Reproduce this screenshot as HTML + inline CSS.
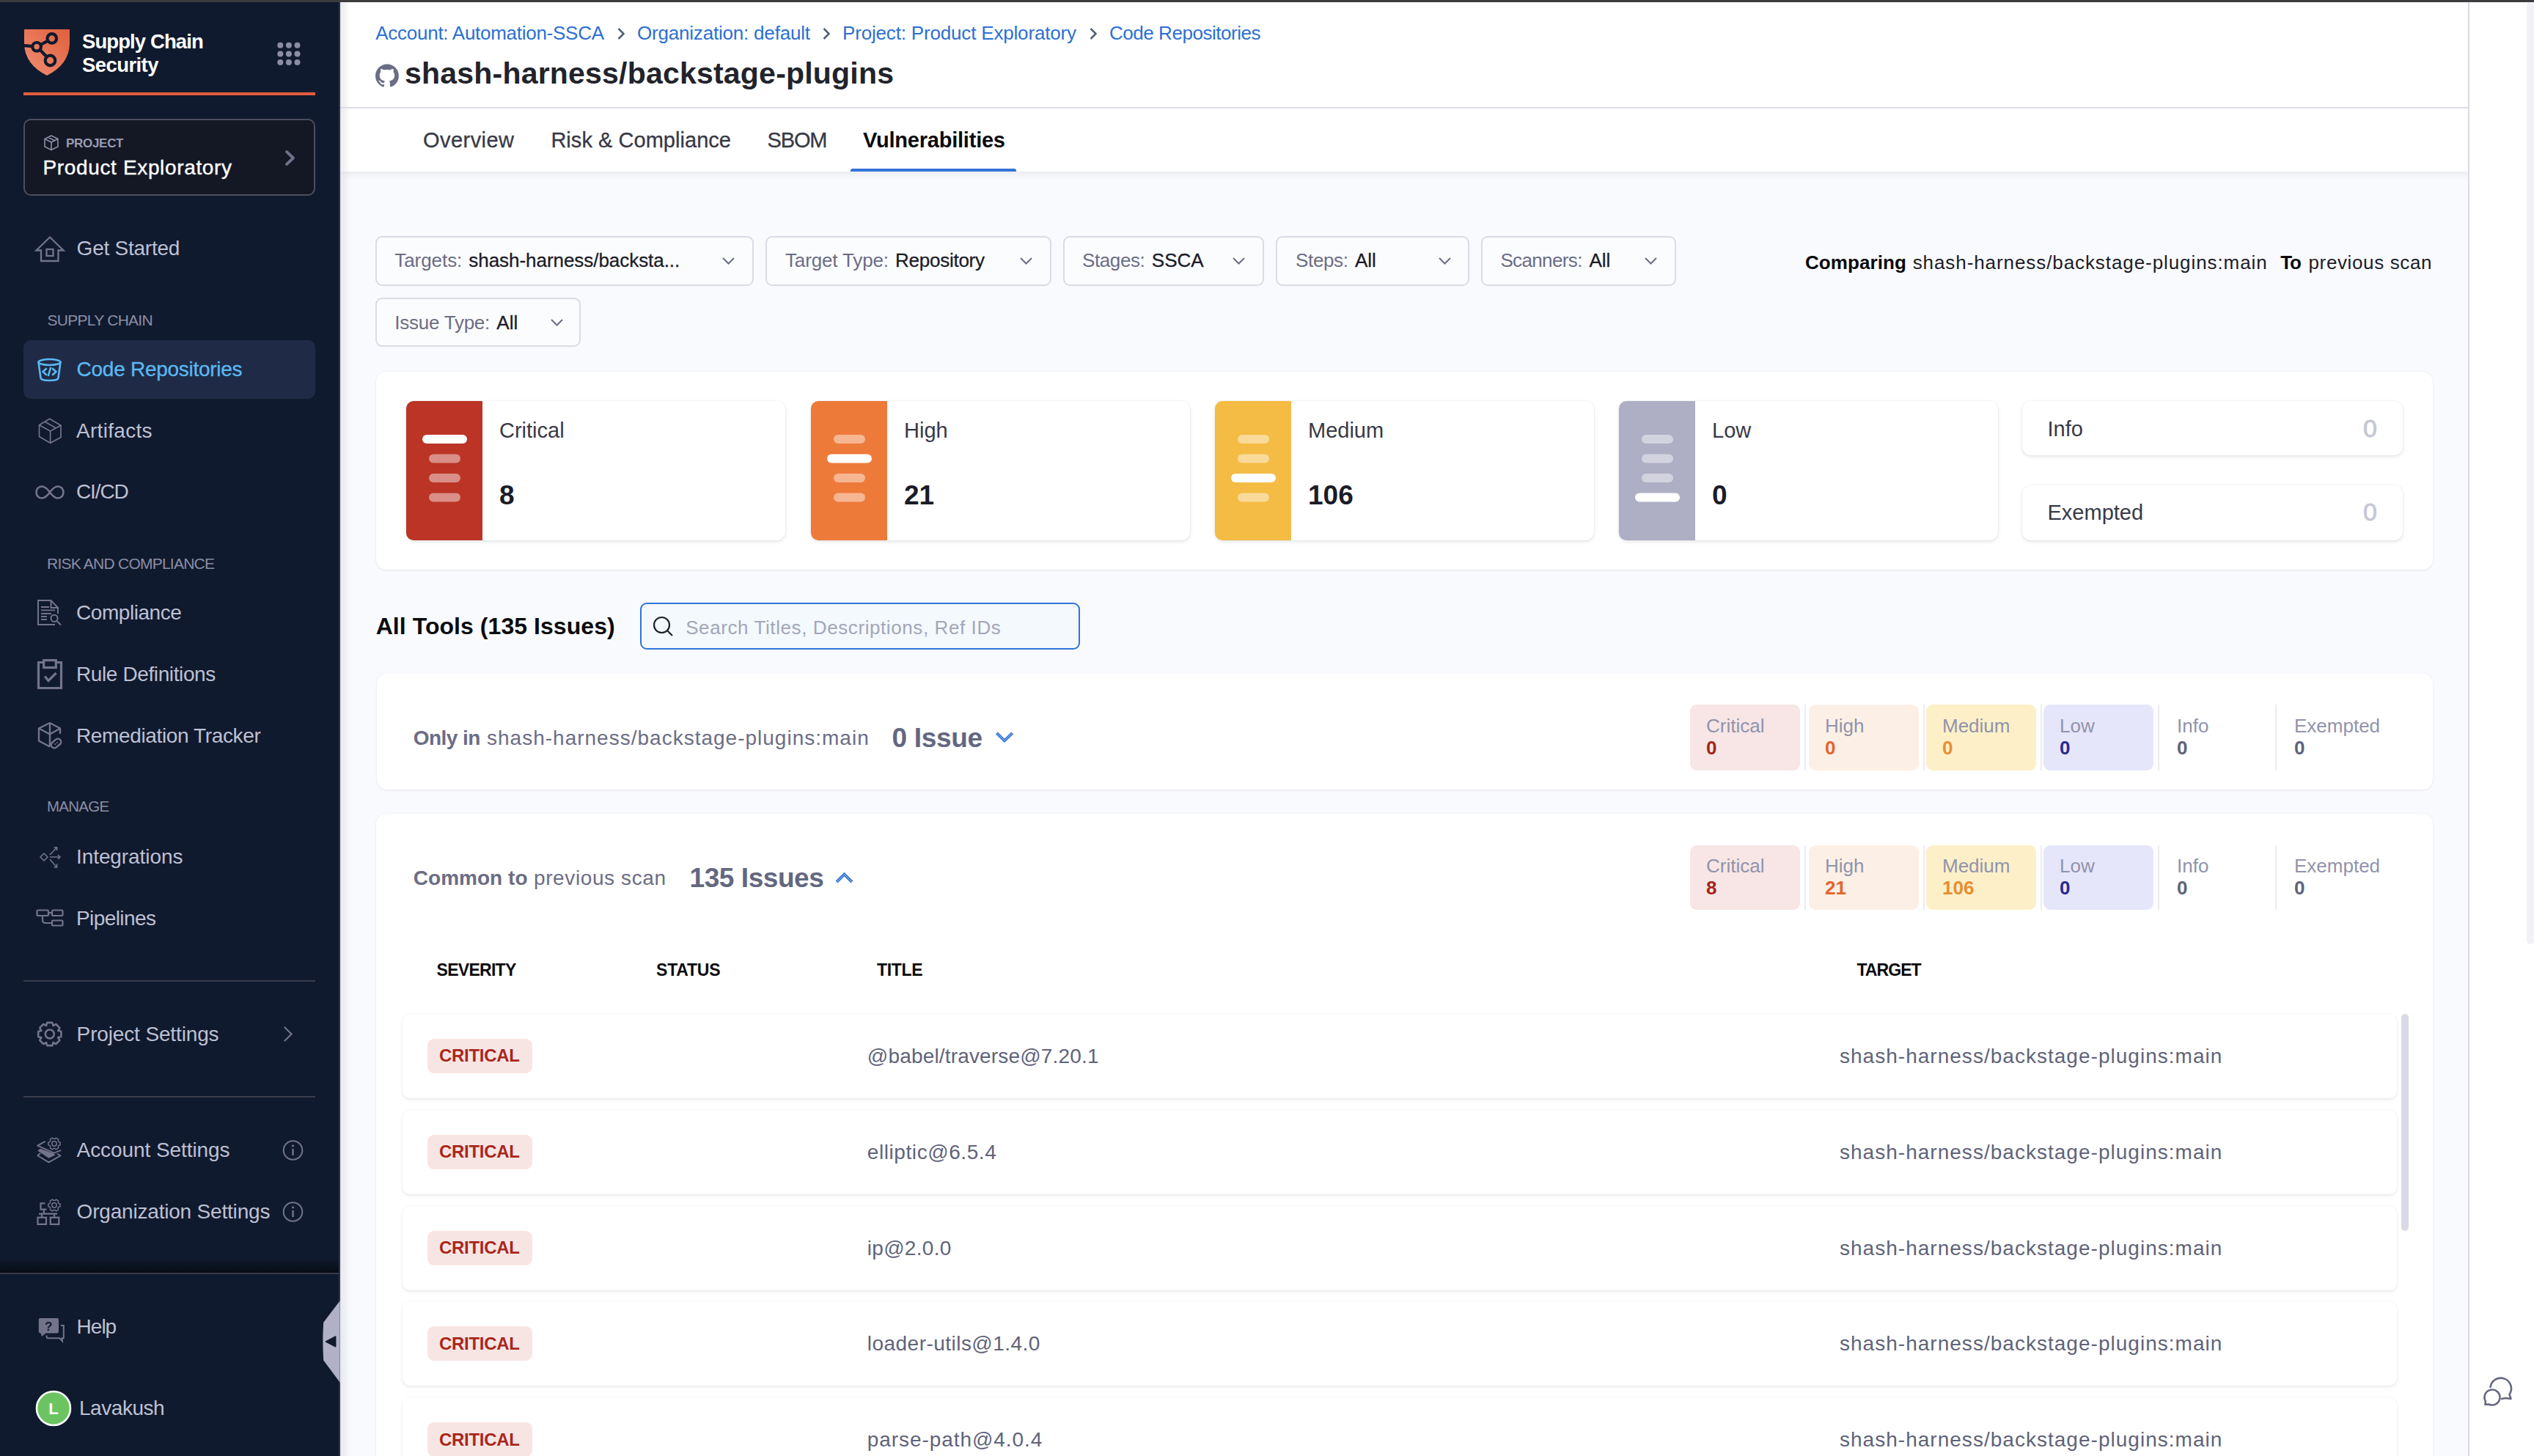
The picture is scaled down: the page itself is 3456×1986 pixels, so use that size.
<!DOCTYPE html>
<html><head><meta charset="utf-8"><style>
html,body{margin:0;padding:0;}
body{width:3456px;height:1986px;overflow:hidden;position:relative;background:#f9fafd;font-family:"Liberation Sans",sans-serif;}
.t{position:absolute;line-height:1;white-space:pre;}
svg{overflow:visible}
</style></head><body>
<div style="position:absolute;left:0px;top:0px;width:464px;height:1986px;background:#101a2e;"></div><div style="position:absolute;left:462px;top:0px;width:2px;height:1986px;background:#2c3244;"></div><div style="position:absolute;left:0px;top:1716px;width:462px;height:20px;background:linear-gradient(to bottom,rgba(0,0,0,0),rgba(0,0,0,0.55));"></div><div style="position:absolute;left:0px;top:1736px;width:462px;height:2px;background:#383a48;"></div><div style="position:absolute;left:464px;top:0px;width:2903px;height:234px;background:#fff;box-shadow:0 4px 8px rgba(96,97,112,0.10);"></div><div style="position:absolute;left:464px;top:146px;width:2903px;height:2px;background:#dcdde8;"></div><div style="position:absolute;left:3367px;top:0px;width:89px;height:1986px;background:#fff;"></div><div style="position:absolute;left:3366px;top:0px;width:2px;height:1986px;background:#d9d9e6;"></div><div style="position:absolute;left:3446px;top:3px;width:10px;height:1285px;background:#f2f1f8;border-radius:5px;"></div><div style="position:absolute;left:464px;top:3px;width:14px;height:1983px;background:linear-gradient(to right,rgba(215,217,225,0.55),rgba(215,217,225,0));"></div><div style="position:absolute;left:0px;top:0px;width:3456px;height:3px;background:#3c3c3c;"></div><div style="position:absolute;left:1160px;top:230px;width:226px;height:4px;background:#3473d9;border-radius:3px 3px 0 0;"></div><div style="position:absolute;left:512px;top:322px;width:516px;height:68px;border:2px solid #dadbe5;border-radius:9px;box-sizing:border-box;background:#fbfcfe;"></div><div style="position:absolute;left:1044px;top:322px;width:390px;height:68px;border:2px solid #dadbe5;border-radius:9px;box-sizing:border-box;background:#fbfcfe;"></div><div style="position:absolute;left:1450px;top:322px;width:274px;height:68px;border:2px solid #dadbe5;border-radius:9px;box-sizing:border-box;background:#fbfcfe;"></div><div style="position:absolute;left:1740px;top:322px;width:264px;height:68px;border:2px solid #dadbe5;border-radius:9px;box-sizing:border-box;background:#fbfcfe;"></div><div style="position:absolute;left:2020px;top:322px;width:266px;height:68px;border:2px solid #dadbe5;border-radius:9px;box-sizing:border-box;background:#fbfcfe;"></div><div style="position:absolute;left:512px;top:406px;width:280px;height:67px;border:2px solid #dadbe5;border-radius:9px;box-sizing:border-box;background:#fbfcfe;"></div><div style="position:absolute;left:513px;top:507px;width:2805px;height:270px;background:#fff;border-radius:14px;box-shadow:0 0 2px rgba(40,41,61,0.06),0 1px 3px rgba(96,97,112,0.10);"></div><div style="position:absolute;left:554px;top:547px;width:517px;height:190px;background:#fff;border-radius:12px;box-shadow:0 0 2px rgba(40,41,61,0.08),0 2px 5px rgba(96,97,112,0.16);overflow:hidden;"></div><div style="position:absolute;left:554px;top:547px;width:104px;height:190px;background:#bb3426;border-radius:10px 0 0 10px;"></div><div style="position:absolute;left:1106px;top:547px;width:517px;height:190px;background:#fff;border-radius:12px;box-shadow:0 0 2px rgba(40,41,61,0.08),0 2px 5px rgba(96,97,112,0.16);overflow:hidden;"></div><div style="position:absolute;left:1106px;top:547px;width:104px;height:190px;background:#ee7a3a;border-radius:10px 0 0 10px;"></div><div style="position:absolute;left:1657px;top:547px;width:517px;height:190px;background:#fff;border-radius:12px;box-shadow:0 0 2px rgba(40,41,61,0.08),0 2px 5px rgba(96,97,112,0.16);overflow:hidden;"></div><div style="position:absolute;left:1657px;top:547px;width:104px;height:190px;background:#f4bc44;border-radius:10px 0 0 10px;"></div><div style="position:absolute;left:2208px;top:547px;width:517px;height:190px;background:#fff;border-radius:12px;box-shadow:0 0 2px rgba(40,41,61,0.08),0 2px 5px rgba(96,97,112,0.16);overflow:hidden;"></div><div style="position:absolute;left:2208px;top:547px;width:104px;height:190px;background:#aeafc4;border-radius:10px 0 0 10px;"></div><div style="position:absolute;left:2758px;top:547px;width:519px;height:74px;background:#fff;border-radius:12px;box-shadow:0 0 2px rgba(40,41,61,0.08),0 2px 5px rgba(96,97,112,0.16);"></div><div style="position:absolute;left:2758px;top:662px;width:519px;height:75px;background:#fff;border-radius:12px;box-shadow:0 0 2px rgba(40,41,61,0.08),0 2px 5px rgba(96,97,112,0.16);"></div><div style="position:absolute;left:873px;top:822px;width:600px;height:64px;border:2px solid #2f75d8;border-radius:9px;box-sizing:border-box;background:#f3f9fd;"></div><div style="position:absolute;left:514px;top:919px;width:2804px;height:158px;background:#fff;border-radius:14px;box-shadow:0 0 2px rgba(40,41,61,0.05),0 1px 3px rgba(96,97,112,0.10);"></div><div style="position:absolute;left:513px;top:1110px;width:2805px;height:990px;background:#fff;border-radius:14px;box-shadow:0 0 2px rgba(40,41,61,0.05),0 1px 3px rgba(96,97,112,0.10);"></div><div style="position:absolute;left:2305px;top:961px;width:150px;height:90px;background:#f7e6e5;border-radius:9px;"></div><div style="position:absolute;left:2461px;top:961px;width:2px;height:90px;background:#ececf2;"></div><div style="position:absolute;left:2467px;top:961px;width:150px;height:90px;background:#fcf0e6;border-radius:9px;"></div><div style="position:absolute;left:2623px;top:961px;width:2px;height:90px;background:#ececf2;"></div><div style="position:absolute;left:2627px;top:961px;width:150px;height:90px;background:#fdf0c8;border-radius:9px;"></div><div style="position:absolute;left:2783px;top:961px;width:2px;height:90px;background:#ececf2;"></div><div style="position:absolute;left:2787px;top:961px;width:150px;height:90px;background:#e6e6fa;border-radius:9px;"></div><div style="position:absolute;left:2943px;top:961px;width:2px;height:90px;background:#ececf2;"></div><div style="position:absolute;left:3103px;top:961px;width:2px;height:90px;background:#ececf2;"></div><div style="position:absolute;left:2305px;top:1153px;width:150px;height:88px;background:#f7e6e5;border-radius:9px;"></div><div style="position:absolute;left:2461px;top:1153px;width:2px;height:88px;background:#ececf2;"></div><div style="position:absolute;left:2467px;top:1153px;width:150px;height:88px;background:#fcf0e6;border-radius:9px;"></div><div style="position:absolute;left:2623px;top:1153px;width:2px;height:88px;background:#ececf2;"></div><div style="position:absolute;left:2627px;top:1153px;width:150px;height:88px;background:#fdf0c8;border-radius:9px;"></div><div style="position:absolute;left:2783px;top:1153px;width:2px;height:88px;background:#ececf2;"></div><div style="position:absolute;left:2787px;top:1153px;width:150px;height:88px;background:#e6e6fa;border-radius:9px;"></div><div style="position:absolute;left:2943px;top:1153px;width:2px;height:88px;background:#ececf2;"></div><div style="position:absolute;left:3103px;top:1153px;width:2px;height:88px;background:#ececf2;"></div><div style="position:absolute;left:549px;top:1383px;width:2720px;height:115px;background:#fff;border-radius:10px;box-shadow:0 0 1.5px rgba(40,41,61,0.05),0 2px 4px rgba(96,97,112,0.13);"></div><div style="position:absolute;left:583px;top:1417px;width:143px;height:47px;background:#f7e5e4;border-radius:9px;"></div><div style="position:absolute;left:549px;top:1514px;width:2720px;height:115px;background:#fff;border-radius:10px;box-shadow:0 0 1.5px rgba(40,41,61,0.05),0 2px 4px rgba(96,97,112,0.13);"></div><div style="position:absolute;left:583px;top:1548px;width:143px;height:47px;background:#f7e5e4;border-radius:9px;"></div><div style="position:absolute;left:549px;top:1645px;width:2720px;height:115px;background:#fff;border-radius:10px;box-shadow:0 0 1.5px rgba(40,41,61,0.05),0 2px 4px rgba(96,97,112,0.13);"></div><div style="position:absolute;left:583px;top:1679px;width:143px;height:47px;background:#f7e5e4;border-radius:9px;"></div><div style="position:absolute;left:549px;top:1775px;width:2720px;height:115px;background:#fff;border-radius:10px;box-shadow:0 0 1.5px rgba(40,41,61,0.05),0 2px 4px rgba(96,97,112,0.13);"></div><div style="position:absolute;left:583px;top:1809px;width:143px;height:47px;background:#f7e5e4;border-radius:9px;"></div><div style="position:absolute;left:549px;top:1906px;width:2720px;height:115px;background:#fff;border-radius:10px;box-shadow:0 0 1.5px rgba(40,41,61,0.05),0 2px 4px rgba(96,97,112,0.13);"></div><div style="position:absolute;left:583px;top:1940px;width:143px;height:47px;background:#f7e5e4;border-radius:9px;"></div><div style="position:absolute;left:3275px;top:1383px;width:10px;height:296px;background:#d9dae5;border-radius:5px;"></div><div style="position:absolute;left:32px;top:126px;width:398px;height:4px;background:#e35c3e;"></div><div style="position:absolute;left:32px;top:162px;width:398px;height:105px;border:2px solid #4b4f5f;border-radius:10px;box-sizing:border-box;background:#131824;"></div><div style="position:absolute;left:32px;top:464px;width:398px;height:80px;background:#1f2b46;border-radius:10px;"></div><div style="position:absolute;left:32px;top:1337px;width:398px;height:2px;background:#3a3e4e;"></div><div style="position:absolute;left:32px;top:1495px;width:398px;height:2px;background:#3a3e4e;"></div><svg style="position:absolute;left:20px;top:30px;" width="100" height="80" viewBox="0 0 100 80"><defs><linearGradient id="lg" x1="0" y1="1" x2="1" y2="0"><stop offset="0" stop-color="#f08f74"/><stop offset="1" stop-color="#e05f3c"/></linearGradient></defs>
<path d="M13 10.5 Q13 10 14 10 L74 10 Q75 10 75 11 L75 30 Q74 58 44 73 Q14 58 13 30 Z" fill="url(#lg)"/>
<g stroke="#101a2e" stroke-width="4.2" fill="none"><circle cx="50.8" cy="22.5" r="6.3"/><circle cx="30.1" cy="33.8" r="5.8"/><circle cx="48.5" cy="52.5" r="6.8"/>
<path d="M35.5 31 L45.3 25.6 M34.3 37.8 L43.5 47.3 M10 31.8 L24.3 33.2"/></g></svg><svg style="position:absolute;left:0px;top:0px;" width="464" height="120" viewBox="0 0 464 120"><circle cx="382.3" cy="61.8" r="4" fill="#8b8da4"/><circle cx="393.90000000000003" cy="61.8" r="4" fill="#8b8da4"/><circle cx="405.5" cy="61.8" r="4" fill="#8b8da4"/><circle cx="382.3" cy="73.39999999999999" r="4" fill="#8b8da4"/><circle cx="393.90000000000003" cy="73.39999999999999" r="4" fill="#8b8da4"/><circle cx="405.5" cy="73.39999999999999" r="4" fill="#8b8da4"/><circle cx="382.3" cy="85.0" r="4" fill="#8b8da4"/><circle cx="393.90000000000003" cy="85.0" r="4" fill="#8b8da4"/><circle cx="405.5" cy="85.0" r="4" fill="#8b8da4"/></svg><svg style="position:absolute;left:58px;top:183px;" width="26" height="26" viewBox="0 0 26 26"><g fill="none" stroke="#8d8fa6" stroke-width="1.6" stroke-linejoin="round"><path d="M12 2 L21 6.5 L21 17 L12 21.5 L3 17 L3 6.5 Z M3 6.5 L12 11 L21 6.5 M12 11 L12 21.5 M7.5 4.3 L16.5 8.8"/></g></svg><svg style="position:absolute;left:386px;top:203px;" width="20" height="26" viewBox="0 0 20 26"><path d="M5 4 L14 12.5 L5 21" fill="none" stroke="#6f718a" stroke-width="3.8" stroke-linecap="round" stroke-linejoin="round"/></svg><svg style="position:absolute;left:46px;top:320px;" width="44" height="40" viewBox="0 0 44 40"><g fill="none" stroke="#72748b" stroke-width="2.3" stroke-linejoin="miter"><path d="M3.5 21.5 L22 3.5 L40.5 21.5 L33.5 21.5 L33.5 36 L10 36 L10 21.5 Z"/><rect x="17.5" y="20" width="9" height="9"/></g></svg><svg style="position:absolute;left:48px;top:486px;" width="40" height="38" viewBox="0 0 40 38"><g fill="none" stroke="#5cb8f2" stroke-width="2.6" stroke-linecap="round" stroke-linejoin="round"><ellipse cx="19.5" cy="8" rx="15" ry="4"/><path d="M4.5 8 L7.5 29.5 Q8 33 19.5 33 Q31 33 31.5 29.5 L34.5 8"/><path d="M15 17 L10.5 21 L15 25 M24 17 L28.5 21 L24 25 M21 16 L18 26"/></g></svg><svg style="position:absolute;left:50px;top:568px;" width="40" height="40" viewBox="0 0 40 40"><g fill="none" stroke="#72748b" stroke-width="1.7" stroke-linejoin="round"><path d="M17.6 3.3 L33 12.2 L33 28.5 L18.6 36.2 L3.5 27.6 L3.5 11.7 Z M3.5 11.7 L18.6 19.9 L33 12.2 M18.6 19.9 L18.6 36.2 M11.6 7.4 L26.5 16"/></g></svg><svg style="position:absolute;left:46px;top:658px;" width="44" height="28" viewBox="0 0 44 28"><path d="M22 13.5 C18 8 15 5.5 11 5.5 C6.5 5.5 3.5 9 3.5 13.5 C3.5 18 6.5 21.5 11 21.5 C15 21.5 18 19 22 13.5 C26 8 29 5.5 33 5.5 C37.5 5.5 40.5 9 40.5 13.5 C40.5 18 37.5 21.5 33 21.5 C29 21.5 26 19 22 13.5 Z" fill="none" stroke="#72748b" stroke-width="2.6"/></svg><svg style="position:absolute;left:48px;top:815px;" width="40" height="42" viewBox="0 0 40 42"><g fill="none" stroke="#72748b" stroke-width="2"><path d="M31 22 L31 14 L21.5 4 L4 4 L4 37 L27 37 M21.5 4 L21.5 14 L31 14"/><path d="M8 13 L19 13 M8 17.4 L27 17.4 M8 22 L22 22 M8 26 L16 26 M8 30 L16 30" stroke-width="1.8"/><circle cx="26" cy="28.3" r="4.6"/><path d="M29.5 32 L35 37.5"/></g></svg><svg style="position:absolute;left:48px;top:897px;" width="40" height="46" viewBox="0 0 40 46"><g fill="none" stroke="#72748b" stroke-width="3.2"><path d="M11.7 6.5 L4.5 6.5 L4.5 41.5 L35.5 41.5 L35.5 6.5 L28.3 6.5"/><rect x="11.7" y="3.6" width="16.6" height="10"/><path d="M13.2 25.5 L18 31.5 L28.6 21" stroke-linecap="butt"/></g></svg><svg style="position:absolute;left:48px;top:983px;" width="42" height="42" viewBox="0 0 42 42"><g fill="none" stroke="#72748b" stroke-width="2.4" stroke-linejoin="round"><path d="M20 3 L34 10.5 L34 18 M20 3 L5 10.5 L5 27.5 L20 35.5 M5 10.5 L20 18.5 L34 10.5 M20 3 L20 18.5 L20 35.5"/><rect x="21" y="26.7" width="15" height="8.6" rx="4.3" transform="rotate(-40 28.5 31)" fill="#101a2e"/></g><g fill="#72748b"><circle cx="27.3" cy="32" r="1"/><circle cx="29.9" cy="30" r="1"/></g></svg><svg style="position:absolute;left:48px;top:1150px;" width="40" height="40" viewBox="0 0 40 40"><g fill="none" stroke="#72748b" stroke-width="1.6" stroke-linejoin="round"><path d="M12 14 L17 19 L12 24 L7 19 Z"/><path d="M20 19 L34 19 M31 16 L34 19 L31 22 M20 16 L29.5 6 M25.5 6 L29.7 5.7 L29.5 10 M20 22 L29.5 33 M29.6 28.5 L29.7 33 L25.5 33"/></g></svg><svg style="position:absolute;left:48px;top:1238px;" width="40" height="28" viewBox="0 0 40 28"><g fill="none" stroke="#72748b" stroke-width="2.2"><rect x="2.5" y="3.5" width="15.5" height="7.5" rx="1.5"/><rect x="23" y="3.5" width="14.5" height="7.5" rx="1.5"/><rect x="23" y="17.5" width="14.5" height="7" rx="1.5"/><path d="M18 7.2 L23 7.2 M10 11 L10 17 Q10 21 14 21 L23 21"/></g></svg><svg style="position:absolute;left:0px;top:0px;" width="464" height="1986" viewBox="0 0 464 1986"><polygon points="83.41,1407.01 83.41,1413.99 79.20,1415.59 79.46,1414.96 81.31,1419.07 76.37,1424.01 72.26,1422.16 72.89,1421.90 71.29,1426.11 64.31,1426.11 62.71,1421.90 63.34,1422.16 59.23,1424.01 54.29,1419.07 56.14,1414.96 56.40,1415.59 52.19,1413.99 52.19,1407.01 56.40,1405.41 56.14,1406.04 54.29,1401.93 59.23,1396.99 63.34,1398.84 62.71,1399.10 64.31,1394.89 71.29,1394.89 72.89,1399.10 72.26,1398.84 76.37,1396.99 81.31,1401.93 79.46,1406.04 79.20,1405.41" fill="none" stroke="#72748b" stroke-width="2.6" stroke-linejoin="round"/><circle cx="67.8" cy="1410.5" r="6" fill="none" stroke="#72748b" stroke-width="2.6"/></svg><svg style="position:absolute;left:380px;top:1398px;" width="24" height="26" viewBox="0 0 24 26"><path d="M8.5 3.5 L17.5 12.5 L8.5 21.5" fill="none" stroke="#72748b" stroke-width="2.2" stroke-linecap="round"/></svg><svg style="position:absolute;left:44px;top:1545px;" width="50" height="50" viewBox="0 0 50 50"><g fill="none" stroke="#72748b" stroke-width="1.9" stroke-linejoin="round" stroke-linecap="round"><path d="M17.2 12.2 L7.2 17.6 L29.3 27.6 L38.5 24.3"/><path d="M10.5 28.6 L7.2 31.3 L22.5 40.4 L38.5 31.3 L34.5 29"/></g><polygon points="7.2,24.6 10.8,21.8 29.3,28.6 31.5,30.5 22.5,34.8" fill="#72748b"/><polygon points="38.10,13.19 38.10,16.81 35.91,17.64 35.24,18.80 35.62,21.11 32.48,22.92 30.67,21.44 29.33,21.44 27.52,22.92 24.38,21.11 24.76,18.80 24.09,17.64 21.90,16.81 21.90,13.19 24.09,12.36 24.76,11.20 24.38,8.89 27.52,7.08 29.33,8.56 30.67,8.56 32.48,7.08 35.62,8.89 35.24,11.20 35.91,12.36" fill="none" stroke="#72748b" stroke-width="1.5" stroke-linejoin="round"/><circle cx="30" cy="15" r="3.2" fill="none" stroke="#72748b" stroke-width="1.5"/></svg><svg style="position:absolute;left:44px;top:1628px;" width="50" height="50" viewBox="0 0 50 50"><g fill="none" stroke="#72748b" stroke-width="2.2"><path d="M17.5 13.3 L11.5 13.3 L11.5 21.7 L19.5 21.7 M15.8 21.7 L15.8 27.5 M9 27.6 L34 27.6 M13 27.6 L13 32.7 M30 27.6 L30 32.7"/><rect x="7.5" y="32.7" width="11.5" height="9.2"/><rect x="24.8" y="32.7" width="11.5" height="9.2"/></g><polygon points="38.10,14.19 38.10,17.81 35.91,18.64 35.24,19.80 35.62,22.11 32.48,23.92 30.67,22.44 29.33,22.44 27.52,23.92 24.38,22.11 24.76,19.80 24.09,18.64 21.90,17.81 21.90,14.19 24.09,13.36 24.76,12.20 24.38,9.89 27.52,8.08 29.33,9.56 30.67,9.56 32.48,8.08 35.62,9.89 35.24,12.20 35.91,13.36" fill="none" stroke="#72748b" stroke-width="1.5" stroke-linejoin="round"/><circle cx="30" cy="16" r="3.2" fill="none" stroke="#72748b" stroke-width="1.5"/></svg><svg style="position:absolute;left:384px;top:1554px;" width="32" height="32" viewBox="0 0 32 32"><circle cx="15.5" cy="15" r="12.8" fill="none" stroke="#72748b" stroke-width="2"/><path d="M15.5 13 L15.5 22" stroke="#72748b" stroke-width="2.4"/><circle cx="15.5" cy="8.8" r="1.6" fill="#72748b"/></svg><svg style="position:absolute;left:384px;top:1638px;" width="32" height="32" viewBox="0 0 32 32"><circle cx="15.5" cy="15" r="12.8" fill="none" stroke="#72748b" stroke-width="2"/><path d="M15.5 13 L15.5 22" stroke="#72748b" stroke-width="2.4"/><circle cx="15.5" cy="8.8" r="1.6" fill="#72748b"/></svg><svg style="position:absolute;left:44px;top:1790px;" width="50" height="50" viewBox="0 0 50 50"><path d="M10.8 8 L34 8 Q36 8 36 10 L36 26.5 Q36 28.5 34 28.5 L18.5 28.5 L13 33 L11.5 28.5 Q8.8 28.5 8.8 26.5 L8.8 10 Q8.8 8 10.8 8 Z" fill="#72748b"/><path d="M39 18 L42.8 18 L42.8 35.2 L40.5 35.2 L41 39.3 L37.2 35.2 L21 35.2 Q19.5 35.2 19.5 31.5" fill="none" stroke="#72748b" stroke-width="2"/><text x="22.3" y="25" font-family="Liberation Sans" font-weight="700" font-size="17" fill="#101a2e" text-anchor="middle">?</text></svg><svg style="position:absolute;left:46px;top:1894px;" width="56" height="56" viewBox="0 0 56 56"><circle cx="27" cy="27" r="23" fill="#6cc461" stroke="#ffffff" stroke-width="2.6"/><text x="27" y="35" font-family="Liberation Sans" font-weight="700" font-size="22" fill="#fff" text-anchor="middle">L</text></svg><svg style="position:absolute;left:430px;top:1770px;" width="40" height="120" viewBox="0 0 40 120"><path d="M33.7 4.2 L11.2 33.8 Q9.5 58 11.2 85.5 L33.7 115.7 Z" fill="#b0b1c6"/><path d="M14.5 60 L27.7 53 L27.7 66.8 Z" fill="#101a2e" stroke="#101a2e" stroke-width="1.5" stroke-linejoin="round"/></svg><svg style="position:absolute;left:512px;top:87px;" width="32" height="32" viewBox="0 0 32 32"><path fill="#6b6d85" d="M16 0.4C7.2 0.4 0 7.6 0 16.4c0 7.1 4.6 13.1 10.9 15.2.8.1 1.1-.3 1.1-.8v-2.7c-4.5 1-5.4-2.1-5.4-2.1-.7-1.8-1.8-2.3-1.8-2.3-1.5-1 .1-1 .1-1 1.6.1 2.4 1.6 2.4 1.6 1.4 2.5 3.8 1.8 4.7 1.4.1-1 .6-1.8 1-2.2-3.6-.4-7.3-1.8-7.3-7.9 0-1.7.6-3.2 1.6-4.3-.2-.4-.7-2.1.2-4.3 0 0 1.3-.4 4.4 1.6 1.3-.4 2.7-.5 4-.5s2.7.2 4 .5c3.1-2.1 4.4-1.6 4.4-1.6.9 2.2.3 3.9.2 4.3 1 1.1 1.6 2.6 1.6 4.3 0 6.1-3.7 7.5-7.3 7.9.6.5 1.1 1.5 1.1 2.9v4.4c0 .4.3.9 1.1.8 6.4-2.1 10.9-8.1 10.9-15.2C32 7.6 24.8.4 16 .4z"/></svg><svg style="position:absolute;left:840px;top:35px;" width="16" height="22" viewBox="0 0 16 22"><path d="M3.5 4 L10.5 11 L3.5 18" fill="none" stroke="#526174" stroke-width="2.5"/></svg><svg style="position:absolute;left:1120px;top:35px;" width="16" height="22" viewBox="0 0 16 22"><path d="M3.5 4 L10.5 11 L3.5 18" fill="none" stroke="#526174" stroke-width="2.5"/></svg><svg style="position:absolute;left:1484px;top:35px;" width="16" height="22" viewBox="0 0 16 22"><path d="M3.5 4 L10.5 11 L3.5 18" fill="none" stroke="#526174" stroke-width="2.5"/></svg><svg style="position:absolute;left:984.4px;top:348.5px;" width="20" height="16" viewBox="0 0 20 16"><path d="M2 3 L9.5 10.5 L17 3" fill="none" stroke="#6b6d85" stroke-width="2"/></svg><svg style="position:absolute;left:1390px;top:348.5px;" width="20" height="16" viewBox="0 0 20 16"><path d="M2 3 L9.5 10.5 L17 3" fill="none" stroke="#6b6d85" stroke-width="2"/></svg><svg style="position:absolute;left:1680px;top:348.5px;" width="20" height="16" viewBox="0 0 20 16"><path d="M2 3 L9.5 10.5 L17 3" fill="none" stroke="#6b6d85" stroke-width="2"/></svg><svg style="position:absolute;left:1960.6px;top:348.5px;" width="20" height="16" viewBox="0 0 20 16"><path d="M2 3 L9.5 10.5 L17 3" fill="none" stroke="#6b6d85" stroke-width="2"/></svg><svg style="position:absolute;left:2242px;top:348.5px;" width="20" height="16" viewBox="0 0 20 16"><path d="M2 3 L9.5 10.5 L17 3" fill="none" stroke="#6b6d85" stroke-width="2"/></svg><svg style="position:absolute;left:749.6px;top:433px;" width="20" height="16" viewBox="0 0 20 16"><path d="M2 3 L9.5 10.5 L17 3" fill="none" stroke="#6b6d85" stroke-width="2"/></svg><svg style="position:absolute;left:0px;top:0px;" width="3456" height="800" viewBox="0 0 3456 800"><rect x="576" y="593" width="61" height="12" rx="6" fill="#ffffff"/><rect x="585" y="619.5" width="43" height="12" rx="6" fill="rgba(255,255,255,0.45)"/><rect x="585" y="646" width="43" height="12" rx="6" fill="rgba(255,255,255,0.45)"/><rect x="585" y="672.5" width="43" height="12" rx="6" fill="rgba(255,255,255,0.45)"/><rect x="1137" y="593" width="43" height="12" rx="6" fill="rgba(255,255,255,0.45)"/><rect x="1128" y="619.5" width="61" height="12" rx="6" fill="#ffffff"/><rect x="1137" y="646" width="43" height="12" rx="6" fill="rgba(255,255,255,0.45)"/><rect x="1137" y="672.5" width="43" height="12" rx="6" fill="rgba(255,255,255,0.45)"/><rect x="1688" y="593" width="43" height="12" rx="6" fill="rgba(255,255,255,0.45)"/><rect x="1688" y="619.5" width="43" height="12" rx="6" fill="rgba(255,255,255,0.45)"/><rect x="1679" y="646" width="61" height="12" rx="6" fill="#ffffff"/><rect x="1688" y="672.5" width="43" height="12" rx="6" fill="rgba(255,255,255,0.45)"/><rect x="2239" y="593" width="43" height="12" rx="6" fill="rgba(255,255,255,0.45)"/><rect x="2239" y="619.5" width="43" height="12" rx="6" fill="rgba(255,255,255,0.45)"/><rect x="2239" y="646" width="43" height="12" rx="6" fill="rgba(255,255,255,0.45)"/><rect x="2230" y="672.5" width="61" height="12" rx="6" fill="#ffffff"/></svg><svg style="position:absolute;left:888px;top:838px;" width="34" height="34" viewBox="0 0 34 34"><circle cx="14.5" cy="14.5" r="10.5" fill="none" stroke="#22222a" stroke-width="2.2"/><path d="M22 22 L29 29" stroke="#22222a" stroke-width="2.2"/></svg><svg style="position:absolute;left:1356px;top:996px;" width="28" height="20" viewBox="0 0 28 20"><path d="M3.3 3.8 L14 14.3 L24.7 3.8" fill="none" stroke="#2f72d4" stroke-width="3.9"/><path d="M3.3 3.8 L14 14.3 L24.7 3.8" fill="none" stroke="#dfe9f8" stroke-width="0.7"/></svg><svg style="position:absolute;left:1138px;top:1187px;" width="28" height="20" viewBox="0 0 28 20"><path d="M3 16 L13.5 5.5 L24 16" fill="none" stroke="#2f72d4" stroke-width="3.9"/><path d="M3 16 L13.5 5.5 L24 16" fill="none" stroke="#dfe9f8" stroke-width="0.7"/></svg><svg style="position:absolute;left:3380px;top:1870px;" width="50" height="50" viewBox="0 0 50 50"><g fill="none" stroke="#656880" stroke-width="2.6" stroke-linejoin="round" stroke-linecap="round"><path d="M16.5 22 A14.3 14.3 0 1 1 42.5 32 L44.5 38 L37 37 L32 38"/><path d="M9.9 41.25 A10.5 10.5 0 1 1 14.56 45.5 L9.5 45.8 Z"/></g></svg>
<div class="t" style="left:112.0px;top:42.7px;font-size:27.5px;color:#ffffff;font-weight:700;letter-spacing:-0.909px;"><span>Supply Chain</span></div><div class="t" style="left:112.0px;top:74.7px;font-size:27.5px;color:#ffffff;font-weight:700;letter-spacing:-0.576px;"><span>Security</span></div><div class="t" style="left:90.0px;top:187.1px;font-size:17px;color:#9a9cb3;font-weight:700;letter-spacing:-0.299px;"><span>PROJECT</span></div><div class="t" style="left:58.5px;top:214.8px;font-size:28px;color:#ffffff;letter-spacing:0.645px;-webkit-text-stroke:0.4px #fff;"><span>Product Exploratory</span></div><div class="t" style="left:104.6px;top:325.3px;font-size:28px;color:#bec0d3;letter-spacing:-0.239px;"><span>Get Started</span></div><div class="t" style="left:64.6px;top:425.7px;font-size:21px;color:#8b8ea5;letter-spacing:-0.737px;"><span>SUPPLY CHAIN</span></div><div class="t" style="left:104.6px;top:489.8px;font-size:28px;color:#5cb8f2;letter-spacing:-0.271px;-webkit-text-stroke:0.3px #5cb8f2;"><span>Code Repositories</span></div><div class="t" style="left:104.0px;top:573.7px;font-size:28px;color:#bec0d3;letter-spacing:0.307px;"><span>Artifacts</span></div><div class="t" style="left:104.0px;top:657.3px;font-size:28px;color:#bec0d3;letter-spacing:-1.109px;"><span>CI/CD</span></div><div class="t" style="left:64.0px;top:758.0px;font-size:21px;color:#8b8ea5;letter-spacing:-0.763px;"><span>RISK AND COMPLIANCE</span></div><div class="t" style="left:104.0px;top:822.0px;font-size:28px;color:#bec0d3;letter-spacing:-0.451px;"><span>Compliance</span></div><div class="t" style="left:104.0px;top:906.0px;font-size:28px;color:#bec0d3;letter-spacing:-0.387px;"><span>Rule Definitions</span></div><div class="t" style="left:104.0px;top:990.0px;font-size:28px;color:#bec0d3;letter-spacing:-0.364px;"><span>Remediation Tracker</span></div><div class="t" style="left:64.0px;top:1090.2px;font-size:20.5px;color:#8b8ea5;letter-spacing:-0.732px;"><span>MANAGE</span></div><div class="t" style="left:104.0px;top:1154.9px;font-size:28px;color:#bec0d3;letter-spacing:-0.084px;"><span>Integrations</span></div><div class="t" style="left:104.0px;top:1238.9px;font-size:28px;color:#bec0d3;letter-spacing:-0.593px;"><span>Pipelines</span></div><div class="t" style="left:104.6px;top:1396.9px;font-size:28px;color:#bec0d3;letter-spacing:-0.141px;"><span>Project Settings</span></div><div class="t" style="left:104.6px;top:1555.2px;font-size:28px;color:#bec0d3;letter-spacing:-0.075px;"><span>Account Settings</span></div><div class="t" style="left:104.6px;top:1639.0px;font-size:28px;color:#bec0d3;letter-spacing:-0.196px;"><span>Organization Settings</span></div><div class="t" style="left:104.6px;top:1795.9px;font-size:28px;color:#bec0d3;letter-spacing:-0.998px;"><span>Help</span></div><div class="t" style="left:108.0px;top:1907.3px;font-size:28px;color:#bec0d3;letter-spacing:-0.454px;"><span>Lavakush</span></div><div class="t" style="left:512.3px;top:32.0px;font-size:26px;color:#2c70d2;letter-spacing:-0.272px;"><span>Account: Automation-SSCA</span></div><div class="t" style="left:869.0px;top:32.0px;font-size:26px;color:#2c70d2;letter-spacing:-0.197px;"><span>Organization: default</span></div><div class="t" style="left:1149.0px;top:32.0px;font-size:26px;color:#2c70d2;letter-spacing:-0.174px;"><span>Project: Product Exploratory</span></div><div class="t" style="left:1513.0px;top:32.0px;font-size:26px;color:#2c70d2;letter-spacing:-0.456px;"><span>Code Repositories</span></div><div class="t" style="left:552.0px;top:79.5px;font-size:41px;color:#22232b;font-weight:700;letter-spacing:0.208px;"><span>shash-harness/backstage-plugins</span></div><div class="t" style="left:577.0px;top:177.1px;font-size:29px;color:#383946;letter-spacing:0.449px;-webkit-text-stroke:0.3px #383946;"><span>Overview</span></div><div class="t" style="left:751.4px;top:177.1px;font-size:29px;color:#383946;letter-spacing:0.038px;-webkit-text-stroke:0.3px #383946;"><span>Risk &amp; Compliance</span></div><div class="t" style="left:1046.5px;top:177.1px;font-size:29px;color:#383946;letter-spacing:-1.135px;-webkit-text-stroke:0.3px #383946;"><span>SBOM</span></div><div class="t" style="left:1177.0px;top:177.1px;font-size:29px;color:#0b0b0d;font-weight:700;letter-spacing:-0.225px;"><span>Vulnerabilities</span></div><div class="t" style="left:538.3px;top:342.3px;font-size:26px;color:#6b6d85;letter-spacing:-0.071px;"><span>Targets:</span></div><div class="t" style="left:639.3px;top:342.3px;font-size:26px;color:#1c1c28;letter-spacing:-0.046px;-webkit-text-stroke:0.3px #1c1c28;"><span>shash-harness/backsta...</span></div><div class="t" style="left:1071.0px;top:342.3px;font-size:26px;color:#6b6d85;letter-spacing:-0.146px;"><span>Target Type:</span></div><div class="t" style="left:1221.0px;top:342.3px;font-size:26px;color:#1c1c28;letter-spacing:-0.253px;-webkit-text-stroke:0.3px #1c1c28;"><span>Repository</span></div><div class="t" style="left:1476.0px;top:342.3px;font-size:26px;color:#6b6d85;letter-spacing:-0.395px;"><span>Stages:</span></div><div class="t" style="left:1570.8px;top:342.3px;font-size:26px;color:#1c1c28;letter-spacing:0.000px;-webkit-text-stroke:0.3px #1c1c28;"><span>SSCA</span></div><div class="t" style="left:1767.0px;top:342.3px;font-size:26px;color:#6b6d85;letter-spacing:-0.344px;"><span>Steps:</span></div><div class="t" style="left:1848.0px;top:342.3px;font-size:26px;color:#1c1c28;letter-spacing:0.000px;-webkit-text-stroke:0.3px #1c1c28;"><span>All</span></div><div class="t" style="left:2046.4px;top:342.3px;font-size:26px;color:#6b6d85;letter-spacing:-0.635px;"><span>Scanners:</span></div><div class="t" style="left:2167.4px;top:342.3px;font-size:26px;color:#1c1c28;letter-spacing:0.000px;-webkit-text-stroke:0.3px #1c1c28;"><span>All</span></div><div class="t" style="left:538.3px;top:427.2px;font-size:26px;color:#6b6d85;letter-spacing:-0.250px;"><span>Issue Type:</span></div><div class="t" style="left:677.3px;top:427.2px;font-size:26px;color:#1c1c28;letter-spacing:0.000px;-webkit-text-stroke:0.3px #1c1c28;"><span>All</span></div><div class="t" style="left:2462.0px;top:345.2px;font-size:26px;color:#0b0b0d;font-weight:700;letter-spacing:0.071px;"><span>Comparing</span></div><div class="t" style="left:2608.7px;top:345.2px;font-size:26px;color:#1c1c28;letter-spacing:0.917px;"><span>shash-harness/backstage-plugins:main</span></div><div class="t" style="left:3110.2px;top:345.2px;font-size:26px;color:#0b0b0d;font-weight:700;letter-spacing:-1.044px;"><span>To</span></div><div class="t" style="left:3148.5px;top:345.2px;font-size:26px;color:#1c1c28;letter-spacing:0.632px;"><span>previous scan</span></div><div class="t" style="left:681.0px;top:573.1px;font-size:29px;color:#383946;letter-spacing:0.000px;"><span>Critical</span></div><div class="t" style="left:681.0px;top:657.2px;font-size:37px;color:#1c1c28;font-weight:700;letter-spacing:0.000px;"><span>8</span></div><div class="t" style="left:1233.0px;top:573.1px;font-size:29px;color:#383946;letter-spacing:0.000px;"><span>High</span></div><div class="t" style="left:1233.0px;top:657.2px;font-size:37px;color:#1c1c28;font-weight:700;letter-spacing:0.000px;"><span>21</span></div><div class="t" style="left:1784.0px;top:573.1px;font-size:29px;color:#383946;letter-spacing:0.000px;"><span>Medium</span></div><div class="t" style="left:1784.0px;top:657.2px;font-size:37px;color:#1c1c28;font-weight:700;letter-spacing:0.000px;"><span>106</span></div><div class="t" style="left:2335.0px;top:573.1px;font-size:29px;color:#383946;letter-spacing:0.000px;"><span>Low</span></div><div class="t" style="left:2335.0px;top:657.2px;font-size:37px;color:#1c1c28;font-weight:700;letter-spacing:0.000px;"><span>0</span></div><div class="t" style="left:2792.5px;top:570.5px;font-size:29px;color:#383946;letter-spacing:0.000px;"><span>Info</span></div><div class="t" style="right:214px;top:567.2px;font-size:34px;color:#c6c7d4;letter-spacing:0.000px;-webkit-text-stroke:0.9px #c6c7d4;"><span>0</span></div><div class="t" style="left:2792.5px;top:685.2px;font-size:29px;color:#383946;letter-spacing:0.000px;"><span>Exempted</span></div><div class="t" style="right:214px;top:681.2px;font-size:34px;color:#c6c7d4;letter-spacing:0.000px;-webkit-text-stroke:0.9px #c6c7d4;"><span>0</span></div><div class="t" style="left:512.7px;top:837.9px;font-size:32px;color:#0b0b0d;font-weight:700;letter-spacing:0.055px;"><span>All Tools (135 Issues)</span></div><div class="t" style="left:935.2px;top:842.6px;font-size:26px;color:#a3a6b8;letter-spacing:0.591px;"><span>Search Titles, Descriptions, Ref IDs</span></div><div class="t" style="left:563.7px;top:992.7px;font-size:28px;color:#6b6d85;font-weight:700;letter-spacing:-0.534px;"><span>Only in</span></div><div class="t" style="left:664.0px;top:992.7px;font-size:28px;color:#6b6d85;letter-spacing:1.003px;"><span>shash-harness/backstage-plugins:main</span></div><div class="t" style="left:1216.6px;top:987.9px;font-size:37px;color:#636780;font-weight:700;letter-spacing:-0.347px;"><span>0 Issue</span></div><div class="t" style="left:563.8px;top:1183.5px;font-size:28px;color:#6b6d85;font-weight:700;letter-spacing:0.021px;"><span>Common to</span></div><div class="t" style="left:728.0px;top:1183.5px;font-size:28px;color:#6b6d85;letter-spacing:0.603px;"><span>previous scan</span></div><div class="t" style="left:940.6px;top:1179.4px;font-size:37px;color:#636780;font-weight:700;letter-spacing:-0.447px;"><span>135 Issues</span></div><div class="t" style="left:2327.0px;top:977.4px;font-size:26px;color:#9193ab;letter-spacing:0.000px;"><span>Critical</span></div><div class="t" style="left:2327.0px;top:1006.7px;font-size:26px;color:#a3261c;font-weight:700;letter-spacing:0.000px;"><span>0</span></div><div class="t" style="left:2489.0px;top:977.4px;font-size:26px;color:#9193ab;letter-spacing:0.000px;"><span>High</span></div><div class="t" style="left:2489.0px;top:1006.7px;font-size:26px;color:#e5652e;font-weight:700;letter-spacing:0.000px;"><span>0</span></div><div class="t" style="left:2649.0px;top:977.4px;font-size:26px;color:#9193ab;letter-spacing:0.000px;"><span>Medium</span></div><div class="t" style="left:2649.0px;top:1006.7px;font-size:26px;color:#e88e33;font-weight:700;letter-spacing:0.000px;"><span>0</span></div><div class="t" style="left:2809.0px;top:977.4px;font-size:26px;color:#9193ab;letter-spacing:0.000px;"><span>Low</span></div><div class="t" style="left:2809.0px;top:1006.7px;font-size:26px;color:#2a2a8f;font-weight:700;letter-spacing:0.000px;"><span>0</span></div><div class="t" style="left:2969.0px;top:977.4px;font-size:26px;color:#9193ab;letter-spacing:0.000px;"><span>Info</span></div><div class="t" style="left:2969.0px;top:1006.7px;font-size:26px;color:#60637a;font-weight:700;letter-spacing:0.000px;"><span>0</span></div><div class="t" style="left:3129.0px;top:977.4px;font-size:26px;color:#9193ab;letter-spacing:0.000px;"><span>Exempted</span></div><div class="t" style="left:3129.0px;top:1006.7px;font-size:26px;color:#60637a;font-weight:700;letter-spacing:0.000px;"><span>0</span></div><div class="t" style="left:2327.0px;top:1168.0px;font-size:26px;color:#9193ab;letter-spacing:0.000px;"><span>Critical</span></div><div class="t" style="left:2327.0px;top:1197.5px;font-size:26px;color:#a3261c;font-weight:700;letter-spacing:0.000px;"><span>8</span></div><div class="t" style="left:2489.0px;top:1168.0px;font-size:26px;color:#9193ab;letter-spacing:0.000px;"><span>High</span></div><div class="t" style="left:2489.0px;top:1197.5px;font-size:26px;color:#e5652e;font-weight:700;letter-spacing:0.000px;"><span>21</span></div><div class="t" style="left:2649.0px;top:1168.0px;font-size:26px;color:#9193ab;letter-spacing:0.000px;"><span>Medium</span></div><div class="t" style="left:2649.0px;top:1197.5px;font-size:26px;color:#e88e33;font-weight:700;letter-spacing:0.000px;"><span>106</span></div><div class="t" style="left:2809.0px;top:1168.0px;font-size:26px;color:#9193ab;letter-spacing:0.000px;"><span>Low</span></div><div class="t" style="left:2809.0px;top:1197.5px;font-size:26px;color:#2a2a8f;font-weight:700;letter-spacing:0.000px;"><span>0</span></div><div class="t" style="left:2969.0px;top:1168.0px;font-size:26px;color:#9193ab;letter-spacing:0.000px;"><span>Info</span></div><div class="t" style="left:2969.0px;top:1197.5px;font-size:26px;color:#60637a;font-weight:700;letter-spacing:0.000px;"><span>0</span></div><div class="t" style="left:3129.0px;top:1168.0px;font-size:26px;color:#9193ab;letter-spacing:0.000px;"><span>Exempted</span></div><div class="t" style="left:3129.0px;top:1197.5px;font-size:26px;color:#60637a;font-weight:700;letter-spacing:0.000px;"><span>0</span></div><div class="t" style="left:595.5px;top:1311.5px;font-size:23px;color:#0b0b0d;font-weight:700;letter-spacing:-0.709px;"><span>SEVERITY</span></div><div class="t" style="left:895.0px;top:1311.5px;font-size:23px;color:#0b0b0d;font-weight:700;letter-spacing:-0.199px;"><span>STATUS</span></div><div class="t" style="left:1196.0px;top:1311.5px;font-size:23px;color:#0b0b0d;font-weight:700;letter-spacing:-0.323px;"><span>TITLE</span></div><div class="t" style="left:2532.4px;top:1311.5px;font-size:23px;color:#0b0b0d;font-weight:700;letter-spacing:-0.929px;"><span>TARGET</span></div><div class="t" style="left:599.0px;top:1428.4px;font-size:24px;color:#a8281c;font-weight:700;letter-spacing:-0.283px;"><span>CRITICAL</span></div><div class="t" style="left:1182.8px;top:1427.0px;font-size:28px;color:#60637a;letter-spacing:0.174px;"><span>@babel/traverse@7.20.1</span></div><div class="t" style="left:2509.0px;top:1427.0px;font-size:28px;color:#60637a;letter-spacing:1.020px;"><span>shash-harness/backstage-plugins:main</span></div><div class="t" style="left:599.0px;top:1559.2px;font-size:24px;color:#a8281c;font-weight:700;letter-spacing:-0.283px;"><span>CRITICAL</span></div><div class="t" style="left:1182.8px;top:1557.8px;font-size:28px;color:#60637a;letter-spacing:0.576px;"><span>elliptic@6.5.4</span></div><div class="t" style="left:2509.0px;top:1557.8px;font-size:28px;color:#60637a;letter-spacing:1.020px;"><span>shash-harness/backstage-plugins:main</span></div><div class="t" style="left:599.0px;top:1690.0px;font-size:24px;color:#a8281c;font-weight:700;letter-spacing:-0.283px;"><span>CRITICAL</span></div><div class="t" style="left:1182.8px;top:1688.6px;font-size:28px;color:#60637a;letter-spacing:0.286px;"><span>ip@2.0.0</span></div><div class="t" style="left:2509.0px;top:1688.6px;font-size:28px;color:#60637a;letter-spacing:1.020px;"><span>shash-harness/backstage-plugins:main</span></div><div class="t" style="left:599.0px;top:1820.8px;font-size:24px;color:#a8281c;font-weight:700;letter-spacing:-0.283px;"><span>CRITICAL</span></div><div class="t" style="left:1182.8px;top:1819.4px;font-size:28px;color:#60637a;letter-spacing:0.467px;"><span>loader-utils@1.4.0</span></div><div class="t" style="left:2509.0px;top:1819.4px;font-size:28px;color:#60637a;letter-spacing:1.020px;"><span>shash-harness/backstage-plugins:main</span></div><div class="t" style="left:599.0px;top:1951.6px;font-size:24px;color:#a8281c;font-weight:700;letter-spacing:-0.283px;"><span>CRITICAL</span></div><div class="t" style="left:1182.8px;top:1950.2px;font-size:28px;color:#60637a;letter-spacing:0.929px;"><span>parse-path@4.0.4</span></div><div class="t" style="left:2509.0px;top:1950.2px;font-size:28px;color:#60637a;letter-spacing:1.020px;"><span>shash-harness/backstage-plugins:main</span></div>
</body></html>
